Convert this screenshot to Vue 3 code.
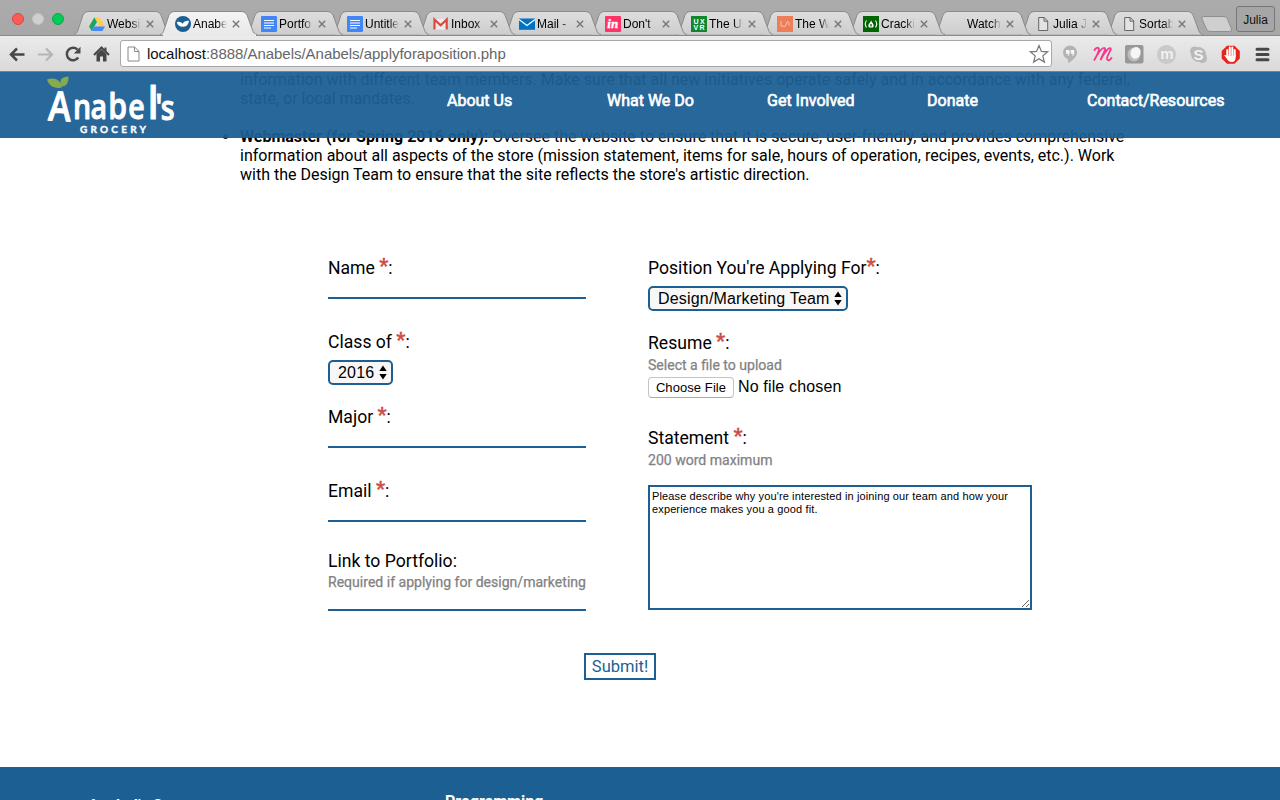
<script setup>
import { ref } from 'vue'

const tabs = [
  { title: 'Websit', icon: 'drive' },
  { title: 'Anabel', icon: 'anabel', active: true },
  { title: 'Portfo', icon: 'docs' },
  { title: 'Untitle', icon: 'docs' },
  { title: 'Inbox', icon: 'gmail' },
  { title: 'Mail -', icon: 'outlook' },
  { title: "Don't", icon: 'invision' },
  { title: 'The Us', icon: 'uxvr' },
  { title: 'The W', icon: 'orange' },
  { title: 'Cracki', icon: 'fcc' },
  { title: 'Watch', icon: 'none' },
  { title: 'Julia J', icon: 'page' },
  { title: 'Sortab', icon: 'page' },
]
const links = ['About Us', 'What We Do', 'Get Involved', 'Donate', 'Contact/Resources']
const statement = ref("Please describe why you're interested in joining our team and how your\nexperience makes you a good fit.")
</script>

<template>
  <div class="window">
    <div class="strip">
      <div class="lights"><i class="red"></i><i class="grey"></i><i class="green"></i></div>
      <div v-for="(t, i) in tabs" :key="i" class="tab" :class="{ active: t.active }" :style="{ zIndex: t.active ? 30 : 20 - i }">
        <svg class="shape" width="97" height="25" viewBox="0 0 97 25">
          <defs>
            <linearGradient id="tabfill" x1="0" y1="0" x2="0" y2="1"><stop offset="0" stop-color="#dedede" /><stop offset="1" stop-color="#cdcdcd" /></linearGradient>
            <linearGradient id="tabactive" x1="0" y1="0" x2="0" y2="1"><stop offset="0" stop-color="#f4f4f4" /><stop offset="1" stop-color="#e9e9e9" /></linearGradient>
          </defs>
          <path d="M0 23.5C2.500 23 3 21.500 4 19L9 4Q10.500 .5 14 .5H82Q85.500 .5 87 4L92.500 19C93.500 21.800 94.500 23 97 23.500" :fill="t.active ? 'url(#tabactive)' : 'url(#tabfill)'" stroke="#8b8b8b" transform="translate(-1 0)" />
          <path v-if="t.active" d="M2 24H95" stroke="#e9e9e9" stroke-width="2" />
        </svg>
        <svg class="fav" width="16" height="16" viewBox="0 0 16 16">
          <template v-if="t.icon === 'drive'">
            <path d="M5.300 1.500h5.300L16 10.500h-5.300z" fill="#ffcf48" />
            <path d="M5.300 1.500 8 6 2.700 15 0 10.500z" fill="#1da462" />
            <path d="M5.400 10.500H16L13.300 15H2.700z" fill="#4688f4" />
          </template>
          <template v-else-if="t.icon === 'anabel'">
            <circle cx="8" cy="8" r="8" fill="#1c5f93" />
            <path d="M1.800 6.200C4 5.200 6.300 6 7.600 7.800c1-2.200 3-3.200 6.400-3-.4 3.500-2 5.700-5.500 6C5 11.200 2.500 9.200 1.800 6.200z" fill="#fff" />
          </template>
          <template v-else-if="t.icon === 'docs'">
            <rect width="16" height="16" rx="1" fill="#4285f4" />
            <path d="M3 4.500h10M3 7h10M3 9.500h10M3 12h7" stroke="#fff" stroke-width="1.200" />
          </template>
          <template v-else-if="t.icon === 'gmail'">
            <path d="M1 3h13v10.500H1z" fill="#eee" />
            <path d="M1.500 13.500V3.500l6.100 5.700 6.100-5.700v10" fill="none" stroke="#d54b3d" stroke-width="2.200" />
            <path d="M2.500 13 6 9M12.800 13 9 9" stroke="#ccc" stroke-width=".7" />
          </template>
          <template v-else-if="t.icon === 'outlook'">
            <path d="M0 2.500h16v11.300H0z" fill="#0072c6" /><path d="M0 3.500 8 9.500l8-6" fill="none" stroke="#fff" stroke-width="1.200" />
          </template>
          <template v-else-if="t.icon === 'invision'">
            <rect width="16" height="16" rx="1" fill="#ff3366" /><text x="2.300" y="12" class="ivn">in</text>
          </template>
          <template v-else-if="t.icon === 'uxvr'">
            <rect width="16" height="16" fill="#12862c" /><text x="2.600" y="7.500" class="tiny" textLength="11">UX</text><text x="2.600" y="14" class="tiny" textLength="11">VR</text>
          </template>
          <template v-else-if="t.icon === 'orange'">
            <rect width="16" height="16" fill="#ee7d59" /><path d="M4 5v5l4 .5 2.500-5 1.500 1v3" fill="none" stroke="#f9c2ad" />
          </template>
          <template v-else-if="t.icon === 'fcc'">
            <rect width="16" height="16" fill="#006400" />
            <path d="M3.500 4.500Q1 8 3.500 11.500M12.500 4.500Q15 8 12.500 11.500" fill="none" stroke="#fff" stroke-width="1.100" />
            <path d="M8 4.200C8 6.500 5.300 7.500 5.300 9.800q0 1.200 1 1.700h3.400q1-.5 1-1.700C10.700 7.500 8.700 6.500 8 4.200z" fill="#fff" /><path d="M8 8v2.500" stroke="#006400" stroke-width="1.300" />
          </template>
          <path v-else-if="t.icon === 'page'" d="M3.700 1.500h5.500l3.500 3.500v9.500h-9zM9 1.500V5.200h3.700" fill="#e3e3e3" stroke="#666" />
        </svg>
        <span class="title">{{ t.title }}</span>
        <svg class="close" width="8" height="8" viewBox="0 0 8 8"><path d="M.8.8 7.200 7.200M7.200.8.8 7.200" stroke="#777" stroke-width="1.400" /></svg>
      </div>
      <svg class="newtab" width="34" height="18" viewBox="0 0 34 18"><path d="M3.500 1.500H24Q26.500 1.500 27.500 4L31.500 14Q32 16.500 29.500 16.500H10Q7.500 16.500 6.500 14L2 4Q1.300 1.500 3.500 1.500z" fill="#cfcfcf" stroke="#8f8f8f" /></svg>
      <button class="user">Julia</button>
    </div>

    <div class="toolbar">
      <svg class="nav-icons" width="120" height="34" viewBox="0 0 120 34">
        <path d="M24.500 17.500H11M17 11.500l-6 6 6 6" fill="none" stroke="#474747" stroke-width="2.500" />
        <path d="M38 17.500h13.500M46 11.500l6 6-6 6" fill="none" stroke="#b5b5b5" stroke-width="2.200" />
        <path d="M78.200 20.500A6.200 6.200 0 1 1 77.500 12.700" fill="none" stroke="#4b4b4b" stroke-width="2.500" />
        <path d="M80.500 9.800V16.500H73.800z" fill="#4b4b4b" />
        <path d="M94 18 101.500 10.500l7.500 7.500M105.500 10.500v3.500" fill="none" stroke="#474747" stroke-width="2" />
        <path d="M96.500 17 101.500 12.300l5 4.700V24.500h-3.500v-5h-3v5h-3.500z" fill="#474747" />
      </svg>
      <div class="omnibox">
        <svg width="13" height="16" viewBox="0 0 13 16"><path d="M1 1h6.500L12 5.300V15H1zM7.500 1v4.500H12" fill="#fff" stroke="#888" /></svg>
        <span class="url"><b>localhost</b>:8888/Anabels/Anabels/applyforaposition.php</span>
        <svg class="star" width="20" height="20" viewBox="0 0 20 20"><path d="M10 1.500l2.400 5.900 6.300.4-4.900 4.100 1.600 6.200-5.400-3.400-5.400 3.400 1.600-6.200L1.300 7.800l6.300-.4z" fill="#fff" stroke="#777" stroke-width="1.200" /></svg>
      </div>
      <svg class="exts" width="228" height="34" viewBox="0 0 228 34">
        <path d="M18 8.500a7 7 0 0 0-2 13.700V26c4-2 9-6 9-10.500a7 7 0 0 0-7-7z" fill="#b3b3b3" />
        <path d="M14 13h3.500v3.500q0 2-2 2.500l.7-2.300H14zM18.700 13h3.500v3.500q0 2-2 2.500l.7-2.300h-2.200z" fill="#f5f5f5" />
        <path d="M42.500 13C43.800 10.500 46.800 10 47 12S44 20.500 42 23.500C45 18 50 10.300 52.500 11S49 20 48.500 23C51 18 56 10.500 58.300 11.200S54 19.500 55 22s3.200.7 4.500-1" fill="none" stroke="#f5378c" stroke-width="1.800" stroke-linecap="round" />
        <rect x="73" y="8" width="18.500" height="18.500" rx="2" fill="#989898" /><ellipse cx="82" cy="17.500" rx="6.500" ry="7" fill="#bdbdbd" /><ellipse cx="83.500" cy="16" rx="5" ry="6" transform="rotate(20 84 16)" fill="#f6f6f6" />
        <circle cx="114.500" cy="17.500" r="9.500" fill="#c9c9c9" /><text x="108.200" y="22" class="em">m</text>
        <circle cx="146.500" cy="17.500" r="7.500" fill="#b9b9b9" /><circle cx="142.500" cy="14" r="4.500" fill="#b9b9b9" /><circle cx="150.500" cy="21.500" r="4.500" fill="#b9b9b9" /><text x="141.400" y="22.500" class="es">S</text>
        <path d="M175 8.800h7.500l5.300 5.200v7.500l-5.300 5.200H175l-5.300-5.200V14z" fill="#e5251c" />
        <path d="M175.300 19v-6M177.800 18v-7.500M180.300 18v-7.500M182.700 19v-6" stroke="#fff" stroke-width="2" stroke-linecap="round" /><path d="M172 18l3 .5h8.700q.3 6-3.200 6.500-4 .3-5.500-3z" fill="#fff" />
        <path d="M205 12.300h11M205 17.500h11M205 22.700h11" stroke="#474747" stroke-width="3" stroke-linecap="round" />
      </svg>
    </div>

    <div class="page">
      <header>
        <svg class="logo" width="132" height="62" viewBox="0 0 132 62">
          <path d="M1 5.500C7 3 15 5 16 13.500 8.500 15 3 12 1 5.500z" fill="#86ab4f" />
          <path d="M15.500 12.500C12.500 6 16 2.500 22.500 2.500 22.500 9 20.500 12.500 15.500 12.500z" fill="#86ab4f" />
          <g class="brand" transform="scale(.84 1)">
            <text x="3" y="47" class="bigA" transform="rotate(3 15 30)">A</text>
            <text x="32" y="45">n</text>
            <text x="53" y="45">a</text>
            <text x="74" y="45" class="b">b</text>
            <text x="98" y="45">e</text>
            <text x="121" y="44.500" class="tall">l</text>
            <text x="130" y="46" class="b">'</text>
            <text x="136.500" y="46">s</text>
          </g>
          <text class="sub" x="34" y="59" textLength="66">GROCERY</text>
        </svg>
        <nav><a v-for="l in links" :key="l">{{ l }}</a></nav>
      </header>

      <ul class="roles">
        <li class="bare">
          <span class="ln l1">information with different team members. Make sure that all new initiatives operate safely and in accordance with any federal,</span>
          <span class="ln l2">state, or local mandates.</span>
        </li>
        <li>
          <span class="ln l3"><strong>Webmaster (for Spring 2016 only):</strong> Oversee the website to ensure that it is secure, user-friendly, and provides comprehensive</span>
          <span class="ln l4">information about all aspects of the store (mission statement, items for sale, hours of operation, recipes, events, etc.). Work</span>
          <span class="ln l5">with the Design Team to ensure that the site reflects the store's artistic direction.</span>
        </li>
      </ul>

      <form @submit.prevent>
        <div class="columns">
          <div class="col">
            <div class="field f74"><label>Name <em>*</em>:</label><input type="text" /></div>
            <div class="field f75"><label>Class of <em>*</em>:</label>
              <div class="select year"><span>2016</span><svg width="8" height="15" viewBox="0 0 8 15"><path d="M.3 6 4 .5 7.700 6zM.3 9 4 14.500 7.700 9z" /></svg></div>
            </div>
            <div class="field f74"><label>Major <em>*</em>:</label><input type="text" /></div>
            <div class="field f70"><label>Email <em>*</em>:</label><input type="text" /></div>
            <div class="field"><label>Link to Portfolio:</label><small>Required if applying for design/marketing</small><input type="text" /></div>
          </div>
          <div class="col right">
            <div class="field f75"><label>Position You're Applying For<em>*</em>:</label>
              <div class="select team"><span>Design/Marketing Team</span><svg width="8" height="15" viewBox="0 0 8 15"><path d="M.3 6 4 .5 7.700 6zM.3 9 4 14.500 7.700 9z" /></svg></div>
            </div>
            <div class="field f95"><label>Resume <em>*</em>:</label><small>Select a file to upload</small>
              <div class="file"><button type="button">Choose File</button><span>No file chosen</span></div>
            </div>
            <div class="field"><label>Statement <em>*</em>:</label><small>200 word maximum</small><textarea v-model="statement"></textarea></div>
          </div>
        </div>
        <button class="submit">Submit!</button>
      </form>

      <footer><span class="shop">Anabel's Grocery</span><span>Programming</span></footer>
    </div>
  </div>
</template>

<style>
body { margin: 0; overflow: hidden; }
</style>

<style scoped>
* { box-sizing: border-box; }
.window { width: 1280px; height: 800px; overflow: hidden; display: flex; flex-direction: column; background: #fff; font-family: Roboto, sans-serif; }
.strip { height: 36px; background: linear-gradient(#acacac, #a7a7a7); display: flex; align-items: flex-end; position: relative; flex: none; border-bottom: 1px solid #8b8b8b; }
.lights { width: 75px; height: 35px; padding: 13px 0 0 12px; display: flex; gap: 8px; flex: none; }
.lights i { width: 12px; height: 12px; border-radius: 50%; flex: none; }
.red { background: #fc5b57; border: 1px solid #e2453f; }
.grey { background: #d0d0d0; border: 1px solid #c2c2c2; }
.green { background: #05c958; border: 1px solid #06ad46; }
.tab { width: 86px; height: 24px; flex: none; position: relative; display: flex; align-items: center; padding: 1px 0 0 14px; font: 12px "Liberation Sans", sans-serif; color: #000; }
.shape { position: absolute; left: 0; top: 0; overflow: visible; }
.fav { position: relative; flex: none; }
.title { position: relative; margin-left: 2px; width: 34px; overflow: hidden; white-space: nowrap; -webkit-mask-image: linear-gradient(90deg, #000 72%, transparent 100%); mask-image: linear-gradient(90deg, #000 72%, transparent 100%); }
.close { position: relative; margin-left: 5px; flex: none; }
.ivn { font: italic bold 13px "Liberation Serif", serif; fill: #fff; stroke: #fff; stroke-width: .4; }
.tiny { font: bold 7px "Liberation Sans", sans-serif; fill: #fff; }
.newtab { margin-left: 7px; margin-bottom: 2px; flex: none; }
.user { position: absolute; right: 5px; top: 6px; width: 39px; height: 26px; padding: 2px 0 0; border: 1px solid #777; border-radius: 3px; background: #a6a6a6; font: 12px "Liberation Sans", sans-serif; color: #111; }

.toolbar { height: 36px; flex: none; display: flex; align-items: center; background: linear-gradient(#ebebeb, #d9d9d9); border-bottom: 1px solid #808080; }
.nav-icons, .exts { flex: none; }
.omnibox { width: 932px; height: 27px; background: #fff; border: 1px solid #a8a8a8; border-radius: 3px; display: flex; align-items: center; padding: 0 2px 0 6px; }
.url { margin-left: 7px; font: 15px "Liberation Sans", sans-serif; letter-spacing: -.03px; color: #666; white-space: nowrap; }
.url b { font-weight: 400; color: #111; }
.star { margin-left: auto; }
.em { font: bold 15px "Liberation Sans", sans-serif; fill: #f1f1f1; }
.es { font: bold 15px "Liberation Sans", sans-serif; fill: #f3f3f3; }

.page { height: 728px; position: relative; overflow: hidden; display: flex; flex-direction: column; }
header { position: absolute; inset: 0 0 auto 0; height: 66px; z-index: 5; display: flex; align-items: center; background: rgba(28, 95, 147, .95); }
.logo { margin: 0 0 0 46px; flex: none; }
.brand { font: 600 34px/1 "Open Sans", sans-serif; fill: #fff; stroke: #fff; stroke-width: .9; stroke-linejoin: round; }
.bigA { font-size: 41px; }
.b { font-size: 36px; }
.tall { font-size: 46px; }
.sub { font: bold 10px Lato, sans-serif; fill: #fff; stroke: #fff; stroke-width: .35; }
nav { margin-left: 269px; display: flex; margin-top: -9px; }
nav a { width: 160px; font-size: 16px; line-height: 19px; color: #fff; -webkit-text-stroke: .65px #fff; white-space: nowrap; }

.roles { margin: -2px 0 0; padding: 0 0 0 240px; font-size: 16px; line-height: 19px; color: #000; flex: none; }
.roles li { margin-bottom: 19px; }
.bare { list-style: none; }
.ln { display: block; white-space: nowrap; text-align-last: justify; }
.l1 { width: 890px; letter-spacing: -.01px; }
.l2 { width: 174px; }
.l3 { width: 884px; }
.l4 { width: 874px; }
.l5 { width: 569px; }

form { margin-top: 55px; padding-left: 328px; flex: none; color: #000; }
.columns { display: grid; grid-template-columns: 258px 384px; column-gap: 62px; }
.col { display: flex; flex-direction: column; }
.field { display: flex; flex-direction: column; align-items: flex-start; }
.f74 { height: 74px; }
.f75 { height: 75px; }
.f70 { height: 70px; }
.f95 { height: 95px; }
label { font-size: 17.600px; line-height: 21px; white-space: nowrap; }
em { font-style: normal; font-weight: 700; font-size: 20px; line-height: 0; color: #cb4f49; -webkit-text-stroke: .3px #cb4f49; vertical-align: 1px; }
small { font-size: 14.060px; line-height: 20px; color: #828282; -webkit-text-stroke: .25px #828282; white-space: nowrap; }
.right small { line-height: 21px; margin-top: 1px; }
input { display: block; width: 258px; height: 20px; padding: 0; margin: 0; border: 0; border-bottom: 2px solid #1c5f93; outline: 0; background: #fff; }
small + input { height: 19px; }
.select { margin-top: 7px; height: 25px; border: 2px solid #1c5f93; border-radius: 5px; background: #f7f7f7; display: flex; align-items: center; justify-content: space-between; padding: 0 4px 0 8px; font: 16px "Liberation Sans", sans-serif; white-space: nowrap; letter-spacing: .18px; }
.year { width: 65px; }
.team { width: 200px; }
.file { display: flex; align-items: center; font: 16px "Liberation Sans", sans-serif; letter-spacing: .15px; height: 21px; margin-top: 1px; }
.file button { width: 86px; height: 21px; padding: 0; font: 13px "Liberation Sans", sans-serif; letter-spacing: .08px; color: #000; background: #fff; border: 1px solid #c4c4c4; border-bottom-color: #aaa; border-radius: 4px; }
.file span { margin: -2px 0 0 4px; }
textarea { width: 384px; height: 125px; margin: 14px 0 0; border: 2px solid #1c5f93; padding: 3px 2px 2px; font: 11px/13px "Liberation Sans", sans-serif; letter-spacing: .13px; color: #000; white-space: pre; overflow: hidden; outline: 0; border-radius: 0; }
.submit { display: block; width: 72px; height: 27px; margin: 42px 0 0 256px; padding: 0; border: 2px solid #1c5f93; background: #fff; color: #1c5f93; font: 16.500px Roboto, sans-serif; border-radius: 0; }
footer { margin-top: auto; height: 33px; background: #1c5f93; color: #fff; font-weight: 700; font-size: 16px; line-height: 19px; padding: 25px 0 0 445px; overflow: hidden; flex: none; display: flex; }
.shop { width: 357px; margin-left: -357px; padding-top: 4px; flex: none; }
</style>
